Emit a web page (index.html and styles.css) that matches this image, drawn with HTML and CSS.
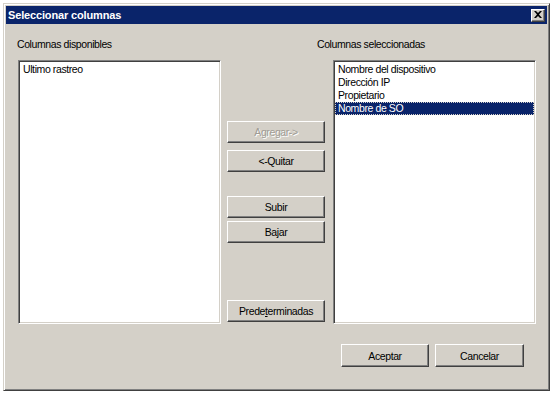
FILE: index.html
```html
<!DOCTYPE html>
<html lang="es">
<head>
    <meta charset="UTF-8">
    <title>Seleccionar columnas</title>
    <link rel="stylesheet" href="styles.css">
</head>
<body>

<div class="window">
    <div class="titlebar">
        <span class="title">Seleccionar columnas</span>
        <button class="close-btn" type="button">
            <svg width="8" height="7" viewBox="0 0 8 7">
                <path d="M0 0h2l2 2 2-2h2L5 3.5 8 7H6L4 5 2 7H0l3-3.5z" fill="#000"/>
            </svg>
        </button>
    </div>

    <div class="content">
        <div class="columns">
            <div class="col">
                <div class="col-label">Columnas disponibles</div>
                <ul class="listbox">
                    <li>Ultimo rastreo</li>
                </ul>
            </div>

            <div class="middle">
                <button class="btn" type="button" disabled>Agregar-&gt;</button>
                <button class="btn btn-quitar" type="button">&lt;-Quitar</button>
                <button class="btn btn-subir" type="button">Subir</button>
                <button class="btn btn-bajar" type="button">Bajar</button>
                <button class="btn btn-default" type="button">Prede<u>t</u>erminadas</button>
            </div>

            <div class="col">
                <div class="col-label col-label-right">Columnas seleccionadas</div>
                <ul class="listbox">
                    <li>Nombre del dispositivo</li>
                    <li>Dirección IP</li>
                    <li>Propietario</li>
                    <li class="selected">Nombre de SO</li>
                </ul>
            </div>
        </div>

        <div class="actions">
            <button class="btn btn-action" type="button">Aceptar</button>
            <button class="btn btn-action btn-cancel" type="button">Cancelar</button>
        </div>
    </div>
</div>

</body>
</html>
```

FILE: styles.css
```css
* {
    box-sizing: border-box;
    margin: 0;
    padding: 0;
}
body {
    background: #fff;
    padding: 3px 0 0 3px;
    font-family: 'Liberation Sans', Arial, sans-serif;
    font-size: 10.5px;
    letter-spacing: -0.4px;
    color: #000;
}
.window {
    width: 547px;
    height: 388px;
    background: #d4d0c8;
    border: 1px solid;
    border-color: #d4d0c8 #404040 #404040 #d4d0c8;
    box-shadow: inset 1px 1px #fff, inset -1px -1px #808080;
    padding: 2px;
    display: flex;
    flex-direction: column;
}
.titlebar {
    height: 18px;
    background: #0a246a;
    display: flex;
    align-items: center;
    justify-content: space-between;
    padding: 0 2px 0 2px;
}
.title {
    color: #fff;
    font-weight: bold;
    font-size: 11px;
    letter-spacing: -0.15px;
}
.close-btn {
    width: 14px;
    height: 13px;
    background: #d4d0c8;
    border: 1px solid;
    border-color: #fff #404040 #404040 #fff;
    box-shadow: inset -1px -1px #808080;
    display: flex;
    align-items: center;
    justify-content: center;
    padding: 0 0 1px 0;
}
.content {
    flex: 1;
    padding: 14px 10px 0 11px;
    display: flex;
    flex-direction: column;
}
.columns {
    display: flex;
}
.col {
    display: flex;
    flex-direction: column;
}
.col-label {
    height: 22px;
    line-height: 13px;
}
.col-label-right {
    margin-left: -15px;
}
.col .listbox {
    margin-left: 1px;
}
.listbox {
    list-style: none;
    width: 203px;
    height: 264px;
    background: #fff;
    border: 1px solid;
    border-color: #808080 #fff #fff #808080;
    box-shadow: inset 1px 1px #404040, inset -1px -1px #d4d0c8;
    padding: 2px 1px;
}
.listbox li {
    height: 13px;
    line-height: 13px;
    padding-left: 3px;
    white-space: nowrap;
}
.listbox li.selected {
    background: #0a246a;
    color: #fff;
    outline: 1px dotted #d4d0c8;
    outline-offset: -1px;
}
.middle {
    width: 98px;
    margin: 22px 7px 0 6px;
    display: flex;
    flex-direction: column;
    padding-top: 61px;
    padding-bottom: 2px;
}
.btn {
    height: 22px;
    font-family: inherit;
    font-size: 10.5px;
    letter-spacing: -0.4px;
    color: #000;
    background: #d4d0c8;
    border: 1px solid;
    border-color: #fff #404040 #404040 #fff;
    box-shadow: inset -1px -1px #808080;
}
.btn:disabled {
    color: #a09c94;
    text-shadow: 1px 1px #fff;
}
.btn-quitar {
    margin-top: 7px;
}
.btn-subir {
    margin-top: 24px;
}
.btn-bajar {
    margin-top: 3px;
}
.btn-default {
    margin-top: auto;
}
.actions {
    display: flex;
    justify-content: flex-end;
    gap: 6px;
    margin-top: 20px;
    padding-right: 13px;
}
.btn-action {
    width: 88px;
    height: 23px;
}
.btn-cancel {
    width: 89px;
}
```
